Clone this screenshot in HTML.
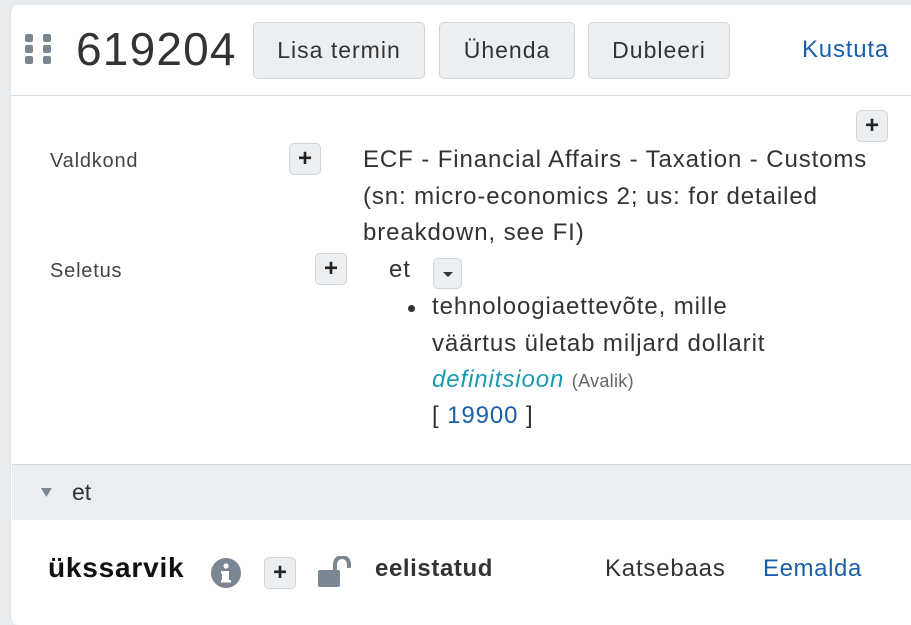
<!DOCTYPE html>
<html><head><meta charset="utf-8"><style>
*{margin:0;padding:0;box-sizing:border-box}
body{width:911px;height:612px;background:#e9ecef;font-family:"Liberation Sans",sans-serif;color:#333;position:relative;overflow:hidden}
.card{position:absolute;left:10px;top:5px;width:920px;height:620px;background:#fff;border-radius:8px;border-left:1px solid #dde2e6}
.a{position:absolute;white-space:nowrap}
.btn{position:absolute;background:#eceff2;border:1px solid #cfd5da;border-radius:5px;font-size:23px;color:#333;display:flex;align-items:center;justify-content:center;letter-spacing:1px}
.pl{position:absolute;width:32px;height:32px;background:#eceff2;border:1px solid #cfd5da;border-radius:5px;font-weight:bold;font-size:24px;display:flex;align-items:center;justify-content:center;color:#222}
.t{font-size:24px;letter-spacing:.9px;color:#333}
.lab{font-size:20px;color:#444;letter-spacing:.8px}
</style></head><body>
<div class="card"></div>
<div class="a" style="left:24px;top:34px">
<svg width="28" height="32"><g fill="#7a8691"><rect x="1" y="0" width="8" height="8" rx="2"/><rect x="1" y="11" width="8" height="8" rx="2"/><rect x="1" y="22" width="8" height="8" rx="2"/><rect x="19" y="0" width="8" height="8" rx="2"/><rect x="19" y="11" width="8" height="8" rx="2"/><rect x="19" y="22" width="8" height="8" rx="2"/></g></svg></div>
<div class="a" style="left:76px;top:22px;font-size:46px;color:#333;letter-spacing:1.2px">619204</div>
<div class="btn" style="left:253px;top:22px;width:172px;height:57px">Lisa termin</div>
<div class="btn" style="left:439px;top:22px;width:136px;height:57px">Ühenda</div>
<div class="btn" style="left:588px;top:22px;width:142px;height:57px">Dubleeri</div>
<div class="a" style="left:802px;top:36px;font-size:24px;letter-spacing:.8px;color:#1a5fa8">Kustuta</div>
<div class="a" style="left:11px;top:95px;width:900px;height:1px;background:#d6dde3"></div>
<div class="pl" style="left:856px;top:110px">+</div>
<div class="a lab" style="left:50px;top:150px">Valdkond</div>
<div class="pl" style="left:289px;top:143px">+</div>
<div class="a t" style="left:363px;top:142px;line-height:36.5px">ECF - Financial Affairs - Taxation - Customs<br>(sn: micro-economics 2; us: for detailed<br>breakdown, see FI)</div>
<div class="a lab" style="left:50px;top:260px">Seletus</div>
<div class="pl" style="left:315px;top:253px">+</div>
<div class="a t" style="left:389px;top:256px">et</div>
<div class="a" style="left:433px;top:258px;width:29px;height:31px;background:#eceff2;border:1px solid #cfd5da;border-radius:5px"><div style="position:absolute;left:9px;top:13px;border-left:5px solid transparent;border-right:5px solid transparent;border-top:5px solid #333"></div></div>
<div class="a" style="left:408px;top:305px;width:7px;height:7px;border-radius:50%;background:#333"></div>
<div class="a t" style="left:432px;top:289px;line-height:36.5px">tehnoloogiaettevõte, mille<br>väärtus ületab miljard dollarit</div>
<div class="a" style="left:432px;top:366px;font-size:24px;font-style:italic;color:#1a9ab0;letter-spacing:.9px">definitsioon <span style="font-style:normal;font-size:18px;color:#666;letter-spacing:.3px">(Avalik)</span></div>
<div class="a t" style="left:432px;top:402px">[ <span style="color:#1a5fa8">19900</span> ]</div>
<div class="a" style="left:12px;top:464px;width:900px;height:56px;background:#eaeef1;border-top:1px solid #cfd8de"></div>
<div class="a" style="left:41px;top:488px;border-left:9px solid transparent;border-right:9px solid transparent;border-top:9px solid #7a8691;width:0;height:0;transform:scaleX(.6);transform-origin:left"></div>
<div class="a" style="left:72px;top:479px;font-size:23px;color:#333">et</div>
<div class="a" style="left:48px;top:552px;font-size:28px;font-weight:bold;color:#111;letter-spacing:.8px">ükssarvik</div>
<div class="a" style="left:210px;top:557px"><svg width="32" height="32"><circle cx="16" cy="16" r="15" fill="#7a8691"/><circle cx="16" cy="9" r="2.6" fill="#fff"/><rect x="12" y="14" width="7" height="11" fill="#fff"/><rect x="11" y="14" width="5" height="2.5" fill="#fff"/><rect x="11" y="23" width="10" height="2.5" fill="#fff"/></svg></div>
<div class="pl" style="left:264px;top:557px">+</div>
<div class="a" style="left:318px;top:556px"><svg width="36" height="32"><rect x="0" y="14" width="22" height="17" rx="2" fill="#7a8691"/><path d="M17 14 V8 a7 7 0 0 1 14 0 V12" stroke="#7a8691" stroke-width="4" fill="none"/></svg></div>
<div class="a" style="left:375px;top:555px;font-size:24px;font-weight:bold;color:#333;letter-spacing:.6px">eelistatud</div>
<div class="a" style="left:605px;top:555px;font-size:24px;color:#333;letter-spacing:.8px">Katsebaas</div>
<div class="a" style="left:763px;top:555px;font-size:24px;color:#1a5fa8;letter-spacing:.6px">Eemalda</div>
</body></html>
